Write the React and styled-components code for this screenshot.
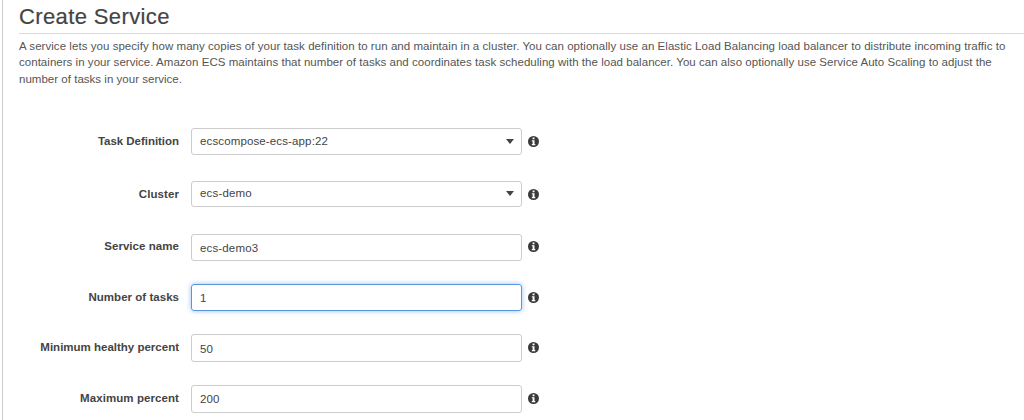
import React from "react";
import styled, { createGlobalStyle } from "styled-components";

const Global = createGlobalStyle`
  * { box-sizing: border-box; }
  body {
    margin: 0;
    background: #fff;
    color: #444;
    font-family: "Liberation Sans", Arial, sans-serif;
    font-size: 11.5px;
    overflow: hidden;
  }
`;

const Page = styled.main`
  height: 420px;
  margin-left: 2px;
  padding-left: 16px;
  border-left: 1px solid #ccc;
  overflow: hidden;
`;

const Title = styled.h1`
  height: 34px;
  margin: 0;
  border-bottom: 1px solid #d9d9d9;
  font-size: 22px;
  font-weight: 400;
  line-height: 33px;
  letter-spacing: ${(p) => p.$spacing}px;
  white-space: nowrap;
  -webkit-text-stroke: 0.2px #444;
`;

const Intro = styled.p`
  height: 88px;
  margin: 0;
  padding-top: 4px;
  color: #555;
  line-height: 16.4px;
`;

const Line = styled.span`
  display: block;
  white-space: nowrap;
  letter-spacing: ${(p) => p.$spacing}px;
`;

const Form = styled.form`
  display: flex;
  flex-direction: column;
  margin-top: 6px;
`;

const Row = styled.div`
  display: flex;
  align-items: flex-start;
  height: ${(p) => p.$height}px;
`;

const Label = styled.label`
  width: 160px;
  margin-right: 12px;
  padding-top: ${(p) => p.$top}px;
  font-weight: 700;
  line-height: 16px;
  text-align: right;
  white-space: nowrap;
  letter-spacing: ${(p) => p.$spacing}px;
`;

const Field = styled.div`
  display: flex;
  justify-content: space-between;
  width: 331px;
  height: ${(p) => p.$height}px;
  padding: ${(p) => p.$top}px 7px 0 8px;
  border: 1px solid ${(p) => (p.$focused ? "#5897dd" : "#ccc")};
  border-radius: 3px;
  box-shadow: ${(p) => (p.$focused ? "0 0 5px rgba(88, 151, 221, 0.6)" : "none")};
  line-height: 16px;
  letter-spacing: ${(p) => p.$spacing}px;
`;

const Caret = styled.span`
  width: 0;
  height: 0;
  margin-top: ${(p) => p.$top}px;
  border: 4.5px solid transparent;
  border-top: 5px solid #444;
  border-bottom: 0;
`;

const InfoIcon = styled.svg`
  width: 11px;
  height: 11px;
  margin: ${(p) => p.$top}px 0 0 6px;
`;

const rows = [
  { label: "Task Definition", value: "ecscompose-ecs-app:22", select: true, height: 53, box: 27, labelTop: 5, valueTop: 4, caret: 6, icon: 8, ls: -0.03, vs: 0.13 },
  { label: "Cluster", value: "ecs-demo", select: true, height: 53, box: 26, labelTop: 5, valueTop: 3, caret: 6, icon: 8, ls: 0.08, vs: 0.18 },
  { label: "Service name", value: "ecs-demo3", height: 50, box: 27, labelTop: 4, valueTop: 5, icon: 7, ls: 0.05, vs: 0.15 },
  { label: "Number of tasks", value: "1", focused: true, height: 50, box: 27, labelTop: 5, valueTop: 5, icon: 8, ls: 0.03, vs: 0.1 },
  { label: "Minimum healthy percent", value: "50", height: 51, box: 28, labelTop: 5, valueTop: 6, icon: 8, ls: 0, vs: 0.1 },
  { label: "Maximum percent", value: "200", height: 35, box: 28, labelTop: 5, valueTop: 5, icon: 8, ls: 0.08, vs: 0.1 },
];

export default function App() {
  return (
    <>
      <Global />
      <Page>
        <Title $spacing={0.38}>Create Service</Title>
        <Intro>
          <Line $spacing={0.05}>A service lets you specify how many copies of your task definition to run and maintain in a cluster. You can optionally use an Elastic Load Balancing load balancer to distribute incoming traffic to</Line>
          <Line $spacing={0.033}>containers in your service. Amazon ECS maintains that number of tasks and coordinates task scheduling with the load balancer. You can also optionally use Service Auto Scaling to adjust the</Line>
          <Line $spacing={0.02}>number of tasks in your service.</Line>
        </Intro>
        <Form>
          {rows.map((r) => (
            <Row key={r.label} $height={r.height}>
              <Label $top={r.labelTop} $spacing={r.ls}>{r.label}</Label>
              <Field $height={r.box} $top={r.valueTop} $focused={r.focused} $spacing={r.vs}>
                {r.value}
                {r.select && <Caret $top={r.caret} />}
              </Field>
              <InfoIcon $top={r.icon} viewBox="0 0 11 11">
                <circle cx="5.5" cy="5.5" r="5.5" fill="#3a3a3a" />
                <path d="M4.6 1.6h1.9v1.6H4.6zM3.8 4.2h2.7v3.9h.8v1.1H3.8V8.1h.8V5.3h-.8z" fill="#fff" />
              </InfoIcon>
            </Row>
          ))}
        </Form>
      </Page>
    </>
  );
}
